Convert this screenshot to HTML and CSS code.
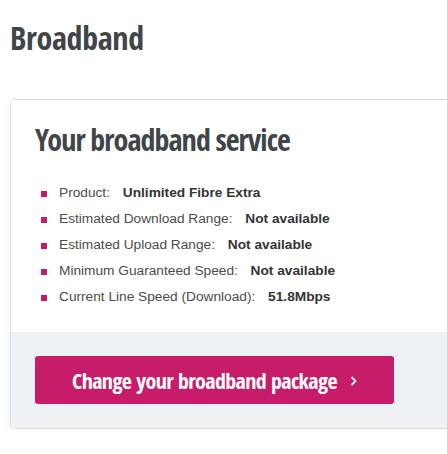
FILE: index.html
```html
<!DOCTYPE html>
<html>
<head>
    <meta name="viewport" content="width=device-width, initial-scale=1.0">
    <title>Broadband</title>
    <link rel="stylesheet" href="styles.css">
</head>
<body>
    <div class="page">
        <h1 class="page-title">Broadband</h1>

        <div class="service-card">
            <div class="service-body">
                <h2 class="service-title">Your broadband service</h2>
                <ul class="service-list">
                    <li><span class="label">Product:</span> <strong>Unlimited Fibre Extra</strong></li>
                    <li><span class="label">Estimated Download Range:</span> <strong>Not available</strong></li>
                    <li><span class="label">Estimated Upload Range:</span> <strong>Not available</strong></li>
                    <li><span class="label">Minimum Guaranteed Speed:</span> <strong>Not available</strong></li>
                    <li><span class="label">Current Line Speed (Download):</span> <strong>51.8Mbps</strong></li>
                </ul>
            </div>
            <div class="service-footer">
                <a href="#" class="change-button">
                    <span>Change your broadband package</span>
                    <svg class="chevron" width="7" height="10" viewBox="0 0 7 10">
                        <polyline points="1.5,1 5.5,5 1.5,9" fill="none" stroke="#ffffff" stroke-width="1.8"/>
                    </svg>
                </a>
            </div>
        </div>
    </div>
</body>
</html>
```

FILE: styles.css
```css
body {
    margin: 0;
    padding: 0;
    background-color: #ffffff;
    font-family: "Liberation Sans", Arial, sans-serif;
    color: #3d3d3d;
    overflow: hidden;
}

.page {
    width: 520px;
    padding: 20px 0 0 10px;
}

.page-title {
    font-family: "Open Sans Condensed", "Roboto Condensed", sans-serif;
    font-weight: bold;
    font-size: 32px;
    letter-spacing: -0.3px;
    line-height: 36px;
    color: #404548;
    margin: 0 0 43px 0;
}

.service-card {
    border: 1px solid #dddddd;
    border-radius: 5px;
    box-shadow: 0 2px 6px rgba(0, 0, 0, 0.08);
    overflow: hidden;
}

.service-body {
    background-color: #ffffff;
    padding: 22px 24px 22px 24px;
}

.service-title {
    font-family: "Open Sans Condensed", "Roboto Condensed", sans-serif;
    font-weight: bold;
    font-size: 30px;
    letter-spacing: -0.9px;
    word-spacing: -1px;
    line-height: 36px;
    color: #404548;
    margin: 0 0 22px 0;
}

.service-list {
    list-style: none;
    margin: 0;
    padding: 0 0 0 6px;
}

.service-list li {
    position: relative;
    padding-left: 18px;
    font-size: 13.7px;
    line-height: 26px;
}

.service-list li::before {
    content: "";
    position: absolute;
    left: 0;
    top: 11px;
    width: 6px;
    height: 6px;
    background-color: #c7196a;
}

.service-list .label {
    color: #4b4b4b;
    margin-right: 9px;
}

.service-list strong {
    color: #333333;
}

.service-footer {
    background-color: #eef2f5;
    padding: 24px;
}

.change-button {
    display: flex;
    align-items: center;
    justify-content: center;
    gap: 13px;
    width: 359px;
    height: 48px;
    box-sizing: border-box;
    background-color: #c71c69;
    border-radius: 3px;
    color: #ffffff;
    text-decoration: none;
    font-family: "Open Sans Condensed", "Roboto Condensed", sans-serif;
    font-weight: bold;
    font-size: 22px;
    letter-spacing: -0.6px;
}

.change-button .chevron {
    display: block;
    margin-top: 2px;
}
```
